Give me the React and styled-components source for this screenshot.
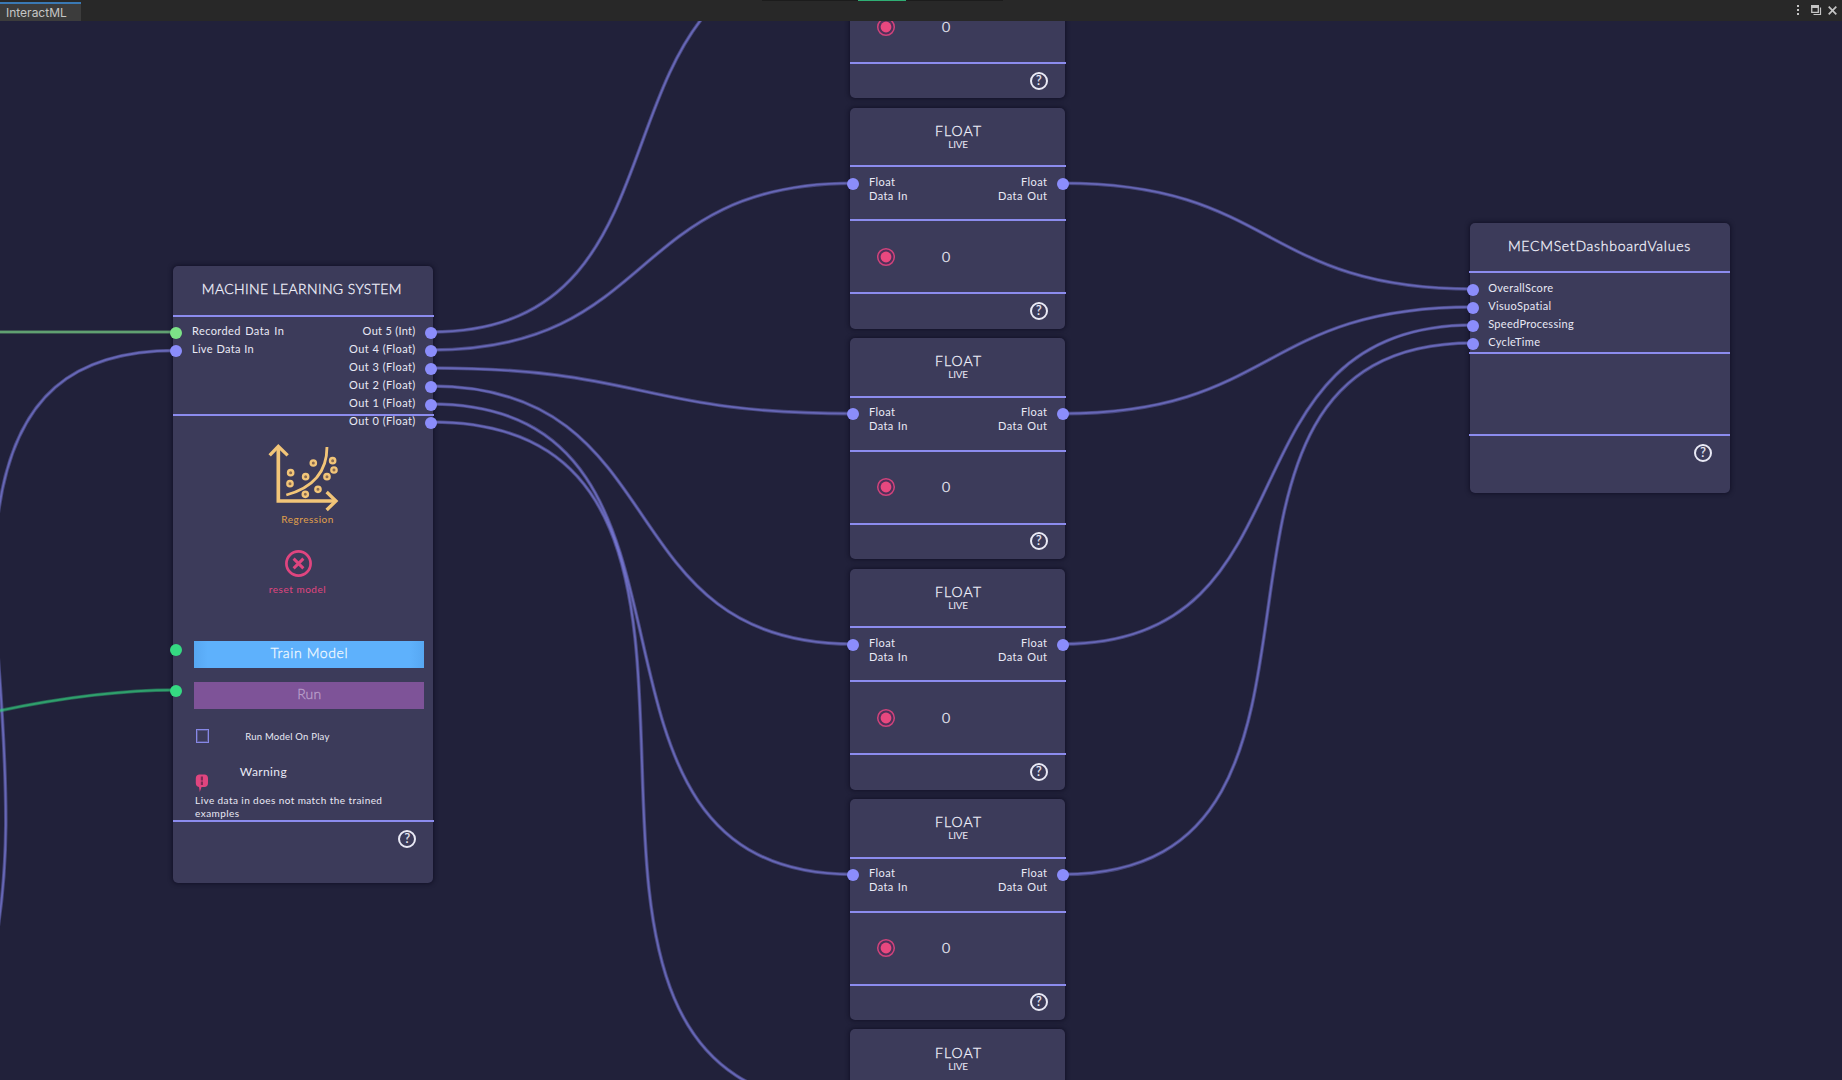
import React from "react";
import styled, { createGlobalStyle } from "styled-components";

const palette = {
  canvas: "#21213a",
  node: "#3c3b5a",
  rule: "#8c8cee",
  purple: "#8b8dfb",
  lightGreen: "#7ce287",
  green: "#35d982",
  pink: "#e0457f",
  amber: "#e0a04a",
  text: "#e9e9f5",
};

const GlobalStyle = createGlobalStyle`
  html, body { margin: 0; padding: 0; background: ${palette.canvas}; }
  *, *::before, *::after { box-sizing: border-box; }
`;

const Window = styled.div`
  display: flex;
  flex-direction: column;
  width: 1842px;
  height: 1080px;
  overflow: hidden;
  background: ${palette.canvas};
  font-family: Lato, "Open Sans", sans-serif;
  color: ${palette.text};
`;

/* ---------- window bar ---------- */

const TitleBar = styled.header`
  flex: none;
  display: flex;
  justify-content: space-between;
  height: 21px;
  padding-top: 2px;
  position: relative;
  background: #282828;
`;

const DockStrip = styled.div`
  position: absolute;
  top: 0;
  left: 762px;
  display: flex;
  justify-content: center;
  width: 241px;
  height: 1px;
  padding-right: 1px;
  background: #1c1c1c;
`;

const DockMarker = styled.span`
  width: 48px;
  height: 1px;
  background: #2fae74;
`;

const Tab = styled.div`
  width: 81px;
  height: 19px;
  padding-left: 6px;
  border-top: 2px solid #3a79b4;
  background: #3c3c3c;
  color: #c6c6c6;
  font: 12px/18px Inter, sans-serif;
`;

const WindowTools = styled.div`
  display: flex;
  align-items: center;
  gap: 6px;
  height: 16px;
  padding-right: 5px;
  color: #c4c4c4;
`;

const MenuDots = styled.svg`
  margin-right: 5px;
`;

/* ---------- graph ---------- */

const Canvas = styled.main`
  flex: 1;
  position: relative;
  overflow: hidden;
`;

const WireLayer = styled.svg`
  position: absolute;
  top: -21px;
  left: 0;
  fill: none;
`;

const Node = styled.section`
  position: absolute;
  left: ${(p) => p.$x}px;
  top: ${(p) => p.$y - 21}px;
  display: flex;
  flex-direction: column;
  width: ${(p) => p.$w}px;
  height: ${(p) => p.$h}px;
  border-radius: 5px;
  background: ${palette.node};
  box-shadow: 0 0 4px 1px rgba(10, 8, 28, 0.6);
`;

const Header = styled.div`
  flex: none;
  display: flex;
  flex-direction: column;
  align-items: center;
  height: ${(p) => p.$h}px;
  padding: ${(p) => p.$pad}px ${(p) => p.$right || 0}px 0 ${(p) => p.$left || 0}px;
`;

const Title = styled.h2`
  margin: 0;
  color: #f0f0fa;
  font-size: 14px;
  font-weight: 300;
  line-height: 16px;
  letter-spacing: ${(p) => p.$ls}px;
  -webkit-text-stroke: 0.3px currentColor;
  white-space: nowrap;
`;

const Subtitle = styled.div`
  margin: -1px 1px 0 0;
  font-size: 10px;
  line-height: 12px;
  letter-spacing: -0.25px;
`;

const Rule = styled.div`
  flex: none;
  height: 2px;
  margin-left: ${(p) => (p.$left ? -1 : 0)}px;
  margin-right: ${(p) => (p.$left ? 0 : -1)}px;
  background: ${palette.rule};
`;

const Ports = styled.div`
  flex: none;
  display: flex;
  justify-content: space-between;
  align-items: flex-start;
  height: ${(p) => p.$h}px;
  padding-top: ${(p) => p.$pad}px;
`;

const PortColumn = styled.div`
  display: flex;
  flex-direction: column;
  align-items: ${(p) => (p.$out ? "flex-end" : "flex-start")};
  margin: 0 ${(p) => (p.$out ? -4 : 0)}px 0 ${(p) => (p.$out ? 0 : -3)}px;
`;

const Port = styled.div`
  flex: none;
  display: flex;
  flex-direction: ${(p) => (p.$out ? "row-reverse" : "row")};
  align-items: flex-start;
  gap: ${(p) => p.$gap || 9.7}px;
  height: 18px;
  text-align: ${(p) => (p.$out ? "right" : "left")};
`;

const Dot = styled.span`
  flex: none;
  width: 12px;
  height: 12px;
  margin-top: 3px;
  border-radius: 50%;
  background: ${(p) => p.$color || palette.purple};
  z-index: 1;
`;

const Label = styled.span`
  font-size: 11px;
  line-height: 14px;
  letter-spacing: ${(p) => p.$ls ?? 0.3}px;
  word-spacing: ${(p) => p.$ws ?? 0}px;
  white-space: pre-line;
`;

const Footer = styled.div`
  flex: 1;
  display: flex;
  justify-content: flex-end;
  padding: 7.6px ${(p) => p.$right}px 0 0;
`;

const HelpBadge = styled.span`
  display: flex;
  align-items: center;
  justify-content: center;
  width: 18px;
  height: 18px;
  border: 2px solid ${palette.text};
  border-radius: 50%;
  font: 400 12.5px/14px Lato, sans-serif;
  -webkit-text-stroke: 0.2px currentColor;
`;

const ValueRow = styled.div`
  flex: none;
  display: flex;
  align-items: center;
  gap: 45.5px;
  height: 71px;
  padding: 0 0 0 26px;
`;

const Record = styled.svg`
  flex: none;
  width: 20px;
  height: 20px;
`;

const Value = styled.span`
  font-size: 14px;
  font-weight: 300;
  line-height: 16px;
  -webkit-text-stroke: 0.35px currentColor;
`;

const Blank = styled.div`
  flex: none;
  height: ${(p) => p.$h}px;
`;

/* ---------- machine learning node body ---------- */

const ModelBody = styled.div`
  flex: none;
  display: flex;
  flex-direction: column;
  height: 404px;
`;

const Figure = styled.div`
  display: flex;
  flex-direction: column;
  align-items: flex-start;
  padding: ${(p) => p.$top}px 0 0 ${(p) => p.$left}px;
`;

const Caption = styled.span`
  margin: ${(p) => p.$top || 0}px 0 0 ${(p) => p.$shift}px;
  color: ${(p) => p.$color};
  font-size: 10px;
  line-height: 14px;
  letter-spacing: 0.53px;
`;

const ActionRow = styled.div`
  display: flex;
  align-items: flex-start;
  gap: 12px;
  height: 27px;
  margin: ${(p) => p.$top}px 9px 0 -3px;
`;

const ActionButton = styled.button`
  flex: 1;
  height: 27px;
  margin: 0;
  padding: 0 0 3px;
  border: 0;
  background: ${(p) =>
    p.$run ? "#7e5398" : "linear-gradient(90deg, #57a7f2, #5eb1fc 6%, #5eb1fc 94%, #57a7f2)"};
  color: ${(p) => (p.$run ? "#b99fca" : "#eef8ff")};
  font: 300 14px/24px Lato, sans-serif;
  letter-spacing: ${(p) => (p.$run ? 0.2 : 0.62)}px;
  -webkit-text-stroke: 0.3px currentColor;
`;

const CheckRow = styled.label`
  display: flex;
  align-items: center;
  gap: 36px;
  height: 14px;
  margin: 20px 0 0 23px;
  font-size: 9.5px;
  letter-spacing: 0.22px;
`;

const CheckBox = styled.span`
  width: 13px;
  height: 14px;
  border: 1px solid #8687e6;
  box-shadow: inset 0 0 0 1px rgba(134, 135, 230, 0.35);
`;

const WarningRow = styled.div`
  display: flex;
  gap: 31px;
  height: 34px;
  margin: 21px 0 0 21.5px;
`;

const WarningTitle = styled.strong`
  font-size: 12px;
  font-weight: 400;
  line-height: 16px;
  letter-spacing: 0.38px;
`;

const WarningGlyph = styled.svg`
  flex: none;
  width: 14px;
  height: 19px;
  margin-top: 9.5px;
`;

const WarningText = styled.p`
  margin: -4px 40px 0 21.8px;
  font-size: 10px;
  line-height: 13px;
  letter-spacing: 0.42px;
`;

/* A wire leaves and enters its ports horizontally; its pull grows with the distance. */
function wirePath([x1, y1], [x2, y2]) {
  const pull = Math.hypot(x2 - x1, y2 - y1) / 2;
  return `M${x1} ${y1} C${x1 + pull} ${y1} ${x2 - pull} ${y2} ${x2} ${y2}`;
}

const floatTops = [-122.6, 107.8, 338.2, 568.6, 799, 1029.4];
const floatPortY = (i) => floatTops[i] + 75.4;

const wires = [
  [[431, 332], [853, floatPortY(0)]],
  [[431, 350], [853, floatPortY(1)]],
  [[431, 368], [853, floatPortY(2)]],
  [[431, 386], [853, floatPortY(3)]],
  [[431, 404], [853, floatPortY(4)]],
  [[431, 422], [853, floatPortY(5)]],
  [[1063, floatPortY(1)], [1473, 289]],
  [[1063, floatPortY(2)], [1473, 307]],
  [[1063, floatPortY(3)], [1473, 325]],
  [[1063, floatPortY(4)], [1473, 343]],
].map(([a, b]) => ({ d: wirePath(a, b), color: "#8182e6" }));

const incoming = [
  { d: "M-2 332 H176", color: "#78cf86" },
  { d: "M176 350.5 C75 350.5 14 394 -2 515", color: "#8182e6" },
  { d: "M-2 655 C3 720 6 780 5.8 825 C5.5 865 3 895 -2 928", color: "#8182e6" },
  { d: "M-2 711 C55 699 115 690 176 690", color: "#35cf80" },
];

function Wires() {
  return (
    <WireLayer width="1842" height="1080" viewBox="0 0 1842 1080">
      {[...wires, ...incoming].map(({ d, color }) => (
        <g key={d} stroke={color}>
          <path d={d} strokeWidth="3.6" strokeOpacity="0.4" />
          <path d={d} strokeWidth="1.8" strokeOpacity="0.55" />
        </g>
      ))}
    </WireLayer>
  );
}

function Help({ right }) {
  return (
    <Footer $right={right}>
      <HelpBadge>?</HelpBadge>
    </Footer>
  );
}

function InPort({ color, gap, ls, ws, children }) {
  return (
    <Port $gap={gap}>
      <Dot $color={color} />
      <Label $ls={ls} $ws={ws}>{children}</Label>
    </Port>
  );
}

function OutPort({ ls, ws, children }) {
  return (
    <Port $out>
      <Dot />
      <Label $ls={ls} $ws={ws}>{children}</Label>
    </Port>
  );
}

/* Parts of a node that are scrolled beyond the canvas are left out. */
function FloatNode({ y }) {
  const aboveCanvas = y < 0;
  const belowCanvas = y > 1000;
  return (
    <Node $x={850.4} $y={y} $w={214.8} $h={221}>
      {aboveCanvas ? (
        <Blank $h={113.6} />
      ) : (
        <>
          <Header $h={57.6} $pad={15.2} $left={1.5}>
            <Title $ls={1.15}>FLOAT</Title>
            <Subtitle>LIVE</Subtitle>
          </Header>
          <Rule />
        </>
      )}
      {!aboveCanvas && !belowCanvas && (
        <>
          <Ports $h={52} $pad={7.6}>
            <PortColumn>
              <InPort ls={0.4} ws={0.9}>{"Float\nData In"}</InPort>
            </PortColumn>
            <PortColumn $out>
              <OutPort ls={0.45} ws={1.2}>{"Float\nData Out"}</OutPort>
            </PortColumn>
          </Ports>
          <Rule />
        </>
      )}
      {!belowCanvas && (
        <>
          <ValueRow>
            <Record viewBox="0 0 20 20">
              <circle cx="10" cy="10" r="8.3" fill="#50305a" stroke="#cf437b" strokeWidth="1.5" />
              <circle cx="10" cy="10" r="5.4" fill="#e8487f" />
            </Record>
            <Value>0</Value>
          </ValueRow>
          <Rule />
          <Help right={17.5} />
        </>
      )}
    </Node>
  );
}

const scatter = [
  [391, 158], [389, 191], [436, 170], [435, 223], [459, 129],
  [473, 208], [500, 170], [517, 122], [521, 150],
];

function RegressionIcon() {
  return (
    <svg width="73.3" height="70" viewBox="320 66 220 210" fill="none" stroke="#f2c578">
      <path d="M354 82 V243 H524" strokeWidth="11" />
      <path d="M328 106 L354 79 L382 106 M499 216 L527 243 L499 270" strokeWidth="10" />
      <path d="M378 225 C440 208 500 170 500 81" strokeWidth="8.5" />
      {scatter.map(([cx, cy]) => (
        <circle key={`${cx}-${cy}`} cx={cx} cy={cy} r="8" strokeWidth="7" fill="#8a6a50" />
      ))}
    </svg>
  );
}

function ResetIcon() {
  return (
    <svg width="27" height="27" viewBox="0 0 27 27" fill="none" stroke={palette.pink}>
      <circle cx="13.5" cy="13.5" r="12.1" strokeWidth="2.7" />
      <path d="M8.6 8.6 L18.4 18.4 M18.4 8.6 L8.6 18.4" strokeWidth="2.9" />
    </svg>
  );
}

function ModelNode() {
  return (
    <Node $x={173.3} $y={265.6} $w={260} $h={617}>
      <Header $h={49.4} $pad={15.4} $right={3}>
        <Title $ls={0.37}>MACHINE LEARNING SYSTEM</Title>
      </Header>
      <Rule />
      <Ports $h={97} $pad={7}>
        <PortColumn>
          <InPort color={palette.lightGreen} ls={0.4} ws={1.2}>Recorded Data In</InPort>
          <InPort ls={0.3} ws={0.5}>Live Data In</InPort>
        </PortColumn>
        <PortColumn $out>
          <OutPort ls={0.3}>Out 5 (Int)</OutPort>
          {[4, 3, 2, 1, 0].map((n) => (
            <OutPort key={n} ls={0.38} ws={0.3}>{`Out ${n} (Float)`}</OutPort>
          ))}
        </PortColumn>
      </Ports>
      <Rule />
      <ModelBody>
        <Figure $top={26} $left={93.4}>
          <RegressionIcon />
          <Caption $color={palette.amber} $shift={14.5}>Regression</Caption>
        </Figure>
        <Figure $top={24.5} $left={111.5}>
          <ResetIcon />
          <Caption $top={4.5} $color={palette.pink} $shift={-16}>reset model</Caption>
        </Figure>
        <ActionRow $top={45.5}>
          <Dot $color={palette.green} />
          <ActionButton>Train Model</ActionButton>
        </ActionRow>
        <ActionRow $top={14}>
          <Dot $color={palette.green} />
          <ActionButton $run>Run</ActionButton>
        </ActionRow>
        <CheckRow>
          <CheckBox />
          Run Model On Play
        </CheckRow>
        <WarningRow>
          <WarningGlyph viewBox="0 0 14 19">
            <path d="M4 0.5 H10 Q13 1 13 4.5 V9 Q13 12.5 10 13 H6.5 L4.8 18 L4 13 Q0.8 12.5 0.8 9 V4.5 Q0.8 1 4 0.5 Z" fill={palette.pink} />
            <path d="M6.9 2.5 V6.6 M6.9 7.6 V11" stroke="#7d2a55" strokeWidth="2.2" />
          </WarningGlyph>
          <WarningTitle>Warning</WarningTitle>
        </WarningRow>
        <WarningText>Live data in does not match the trained examples</WarningText>
      </ModelBody>
      <Rule />
      <Help right={17} />
    </Node>
  );
}

function DashboardNode() {
  return (
    <Node $x={1470} $y={222.6} $w={259.8} $h={270.6}>
      <Header $h={48.4} $pad={15.4} $right={1}>
        <Title $ls={0.74}>MECMSetDashboardValues</Title>
      </Header>
      <Rule $left />
      <Ports $h={79} $pad={8.4}>
        <PortColumn>
          <InPort gap={9.2}>OverallScore</InPort>
          <InPort gap={9.2} ls={0.35}>VisuoSpatial</InPort>
          <InPort gap={9.2}>SpeedProcessing</InPort>
          <InPort gap={9.2} ls={0.35}>CycleTime</InPort>
        </PortColumn>
      </Ports>
      <Rule $left />
      <Blank $h={80} />
      <Rule $left />
      <Help right={17.8} />
    </Node>
  );
}

export default function App() {
  return (
    <Window>
      <GlobalStyle />
      <TitleBar>
        <DockStrip>
          <DockMarker />
        </DockStrip>
        <Tab>InteractML</Tab>
        <WindowTools>
          <MenuDots width="4" height="12" viewBox="0 0 4 12" fill="currentColor">
            <path d="M1 1h2v2h-2z M1 5h2v2h-2z M1 9h2v2h-2z" />
          </MenuDots>
          <svg width="11" height="11" viewBox="0 0 11 11" fill="none" stroke="currentColor">
            <path d="M0.75 1 V7.3 H7.3 V1" strokeWidth="1.3" />
            <path d="M0 1.5 H8" strokeWidth="3" />
            <path d="M9.5 2.5 V9.5 H2.5" strokeWidth="1.2" />
          </svg>
          <svg width="9" height="9" viewBox="0 0 9 9" stroke="currentColor" strokeWidth="1.7">
            <path d="M0.7 0.7 L8.3 8.3 M8.3 0.7 L0.7 8.3" />
          </svg>
        </WindowTools>
      </TitleBar>
      <Canvas>
        <Wires />
        <ModelNode />
        {floatTops.map((y) => (
          <FloatNode key={y} y={y} />
        ))}
        <DashboardNode />
      </Canvas>
    </Window>
  );
}
